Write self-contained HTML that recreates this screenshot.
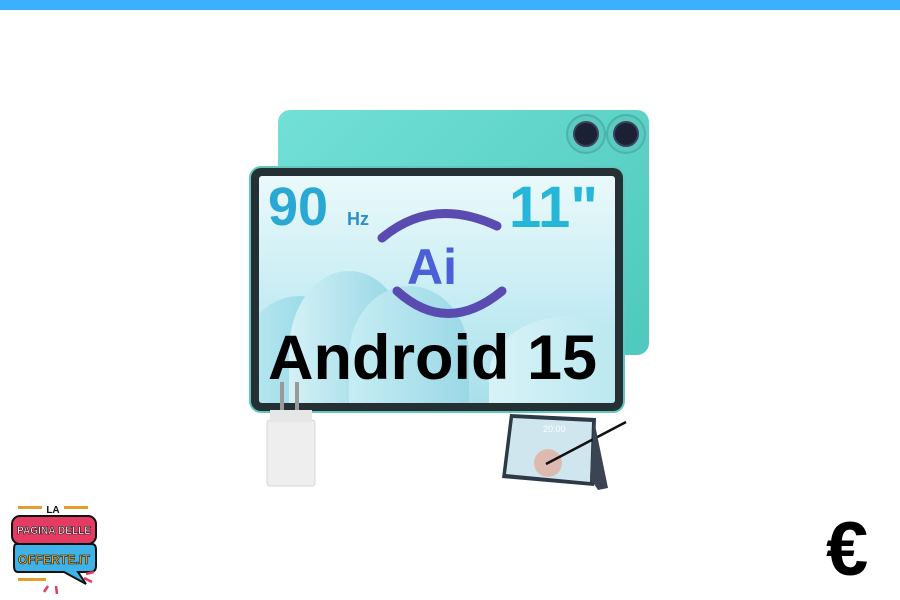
<!DOCTYPE html>
<html><head><meta charset="utf-8"><style>
*{margin:0;padding:0;box-sizing:border-box}
body{width:900px;height:600px;background:#fff;position:relative;overflow:hidden;font-family:"Liberation Sans",sans-serif}
.bar{position:absolute;left:0;top:0;width:900px;height:10px;background:#3cb1fb}
.back{position:absolute;left:278px;top:110px;width:371px;height:245px;background:linear-gradient(135deg,#72e0d6,#4fc9bd);border-radius:12px}
.cam{position:absolute;width:36px;height:36px;border-radius:50%;background:#5ccabf;box-shadow:0 0 0 2px #48b4aa}
.cam i{position:absolute;left:5px;top:5px;width:26px;height:26px;border-radius:50%;background:#1c2033;border:2px solid #3a4060}
.front{position:absolute;left:251px;top:168px;width:372px;height:243px;background:#243033;border-radius:10px;box-shadow:0 0 0 2px #63c7bd}
.screen{position:absolute;left:8px;top:8px;width:356px;height:227px;border-radius:3px;overflow:hidden;background:linear-gradient(180deg,#eaf9fb 0%,#cdeff5 45%,#a9e0ea 100%)}
.w{position:absolute;border-radius:50% 50% 0 0;background:linear-gradient(90deg,#bfeaf2,#7fcfe0)}
.t{position:absolute;font-weight:bold;color:#1ea6cf}
.and{position:absolute;left:9px;top:146px;font-size:63px;font-weight:bold;color:#000;letter-spacing:0px;white-space:nowrap}
.euro{position:absolute;left:826px;top:506px;font-size:76px;font-weight:bold;color:#000}
</style></head><body>
<div class="bar"></div>
<div class="back">
 <div class="cam" style="left:290px;top:6px"><i></i></div>
 <div class="cam" style="left:330px;top:6px"><i></i></div>
</div>
<div class="front"><div class="screen">
 <div class="w" style="left:-20px;top:120px;width:120px;height:140px"></div>
 <div class="w" style="left:30px;top:95px;width:120px;height:160px;background:linear-gradient(90deg,#d4f1f6,#8fd4e4)"></div>
 <div class="w" style="left:90px;top:110px;width:120px;height:140px;background:linear-gradient(90deg,#c6edf4,#9ad8e6)"></div>
 <div class="w" style="left:230px;top:140px;width:160px;height:120px;background:linear-gradient(90deg,#d8f3f7,#b3e5ee)"></div>
 <div class="t" style="left:9px;top:0px;font-size:54px;color:#2aa8d4">90</div>
 <div class="t" style="left:88px;top:33px;font-size:18px;color:#2f8fcb">Hz</div>
 <div class="t" style="left:250px;top:-2px;font-size:58px;color:#25b6d8">11"</div>
 <svg style="position:absolute;left:118px;top:20px" width="140" height="130" viewBox="0 0 140 130">
  <path d="M5 42 Q55 0 120 30" stroke="#5a4bb0" stroke-width="9" fill="none" stroke-linecap="round"/>
  <path d="M20 95 Q70 140 125 95" stroke="#5a4bb0" stroke-width="9" fill="none" stroke-linecap="round"/>
  <text x="30" y="88" font-family="Liberation Sans" font-weight="bold" font-size="50" fill="#4a5fd8">Ai</text>
 </svg>
 <div class="and">Android 15</div>
</div></div>
<svg style="position:absolute;left:262px;top:380px" width="60" height="110">
 <rect x="18" y="2" width="4" height="30" fill="#999"/><rect x="33" y="2" width="4" height="30" fill="#999"/>
 <rect x="5" y="40" width="48" height="66" rx="3" fill="#eeeeee" stroke="#d5d5d5"/>
 <rect x="8" y="30" width="42" height="12" fill="#e6e6e6"/>
</svg>
<svg style="position:absolute;left:498px;top:408px" width="135" height="85">
 <polygon points="12,6 98,10 96,78 4,70" fill="#2c3a48"/>
 <polygon points="15,10 94,14 92,74 8,66" fill="#cfe6ef"/>
 <circle cx="50" cy="55" r="14" fill="#e69c85" opacity="0.6"/>
 <text x="45" y="24" font-size="9" fill="#fff" font-family="Liberation Sans">20:00</text>
 <line x1="48" y1="56" x2="128" y2="14" stroke="#111" stroke-width="2.5"/>
 <polygon points="96,12 110,80 100,82 92,70" fill="#3a4452"/>
</svg>
<svg style="position:absolute;left:8px;top:498px" width="92" height="98" viewBox="0 0 92 98">
 <rect x="10" y="8" width="24" height="3" fill="#e89a2a"/><rect x="56" y="8" width="24" height="3" fill="#e89a2a"/>
 <text x="45" y="15" text-anchor="middle" font-size="10" font-weight="bold" font-family="Liberation Sans" fill="#111">LA</text>
 <rect x="4" y="18" width="84" height="28" rx="8" fill="#e43b62" stroke="#111" stroke-width="2"/>
 <text x="46" y="36" text-anchor="middle" font-size="11" font-weight="bold" font-family="Liberation Sans" fill="#fff" stroke="#111" stroke-width="0.6" textLength="74" lengthAdjust="spacingAndGlyphs">PAGINA DELLE</text>
 <path d="M8 46 H84 Q88 46 88 52 V68 Q88 74 82 74 H70 L78 86 L56 74 H10 Q6 74 6 68 V52 Q6 46 8 46Z" fill="#3fb3e8" stroke="#111" stroke-width="2"/>
 <text x="46" y="66" text-anchor="middle" font-size="13" font-weight="bold" font-family="Liberation Sans" fill="#f5a623" stroke="#111" stroke-width="0.6" textLength="72" lengthAdjust="spacingAndGlyphs">OFFERTE.IT</text>
 <rect x="10" y="80" width="28" height="3" fill="#e89a2a"/>
 <path d="M40 88 l-4 6 M48 88 l1 8 M76 80 l8 4 M78 76 l8 -2" stroke="#e43b62" stroke-width="2.5"/>
</svg>
<div class="euro">€</div>
</body></html>
